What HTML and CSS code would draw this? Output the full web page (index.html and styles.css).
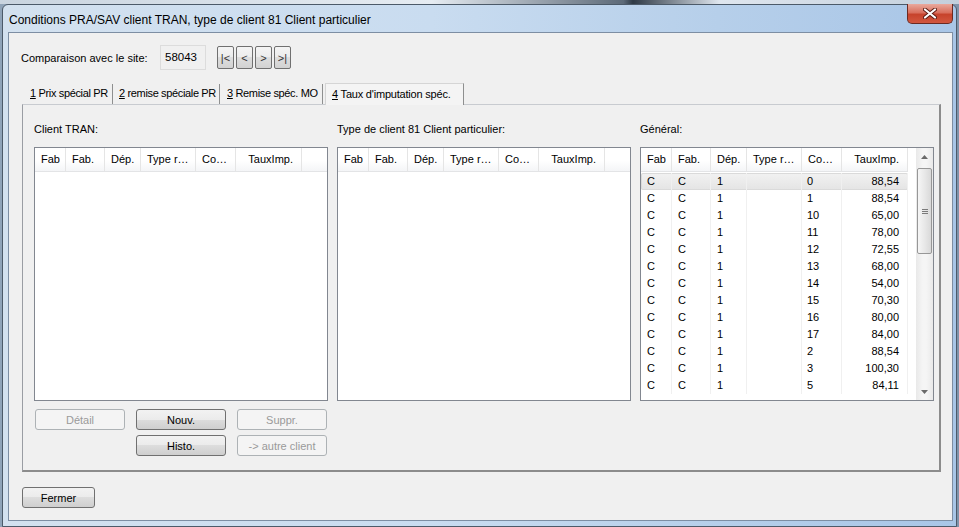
FILE: index.html
```html
<!DOCTYPE html>
<html lang="fr">
<head>
    <meta charset="UTF-8">
    <title>Conditions PRA/SAV client TRAN</title>
    <link rel="stylesheet" href="styles.css">
</head>
<body>
    <div class="behind"></div>
    <div class="window">
        <div class="titlebar">
            <span class="title">Conditions PRA/SAV client TRAN, type de client 81 Client particulier</span>
            <button class="close" type="button">
                <svg width="14" height="11" viewBox="0 0 14 11">
                    <path d="M2 1.5 L12 9.5 M12 1.5 L2 9.5" stroke="#5a1a12" stroke-width="4" stroke-linecap="round"/>
                    <path d="M2 1.5 L12 9.5 M12 1.5 L2 9.5" stroke="#ffffff" stroke-width="2.2" stroke-linecap="round"/>
                </svg>
            </button>
        </div>

        <div class="client">
            <!-- site de comparaison -->
            <div class="site-row">
                <span class="site-label">Comparaison avec le site:</span>
                <span class="site-box">58043</span>
                <div class="nav-btns">
                    <button type="button">|&lt;</button>
                    <button type="button">&lt;</button>
                    <button type="button">&gt;</button>
                    <button type="button">&gt;|</button>
                </div>
            </div>

            <!-- onglets -->
            <div class="tabs">
                <span class="tab t1"><u>1</u> Prix spécial PR</span>
                <span class="tab t2"><u>2</u> remise spéciale PR</span>
                <span class="tab t3"><u>3</u> Remise spéc. MO</span>
                <span class="tab t4 selected"><u>4</u> Taux d'imputation spéc.</span>
            </div>

            <div class="panel">
                <div class="columns">
                    <!-- Client -->
                    <div class="col">
                        <div class="col-label">Client TRAN:</div>
                        <div class="listview">
                            <div class="lv-main">
                                <div class="lv-head">
                                    <span>Fab</span><span>Fab.</span><span>Dép.</span><span>Type r…</span><span>Co…</span><span class="num">TauxImp.</span>
                                </div>
                                <div class="lv-body"></div>
                            </div>
                        </div>
                        <div class="btn-grid">
                            <button type="button" class="btn" disabled>Détail</button>
                            <button type="button" class="btn">Nouv.</button>
                            <button type="button" class="btn" disabled>Suppr.</button>
                            <span></span>
                            <button type="button" class="btn">Histo.</button>
                            <button type="button" class="btn" disabled>-&gt; autre client</button>
                        </div>
                    </div>

                    <!-- Type de client -->
                    <div class="col">
                        <div class="col-label">Type de client 81 Client particulier:</div>
                        <div class="listview">
                            <div class="lv-main">
                                <div class="lv-head">
                                    <span>Fab</span><span>Fab.</span><span>Dép.</span><span>Type r…</span><span>Co…</span><span class="num">TauxImp.</span>
                                </div>
                                <div class="lv-body"></div>
                            </div>
                        </div>
                    </div>

                    <!-- Général -->
                    <div class="col">
                        <div class="col-label">Général:</div>
                        <div class="listview">
                            <div class="lv-main">
                                <div class="lv-head">
                                    <span>Fab</span><span>Fab.</span><span>Dép.</span><span>Type r…</span><span>Co…</span><span class="num">TauxImp.</span>
                                </div>
                                <div class="lv-body">
                                    <div class="lv-row sel"><span>C</span><span>C</span><span>1</span><span></span><span>0</span><span class="num">88,54</span></div>
                                    <div class="lv-row"><span>C</span><span>C</span><span>1</span><span></span><span>1</span><span class="num">88,54</span></div>
                                    <div class="lv-row"><span>C</span><span>C</span><span>1</span><span></span><span>10</span><span class="num">65,00</span></div>
                                    <div class="lv-row"><span>C</span><span>C</span><span>1</span><span></span><span>11</span><span class="num">78,00</span></div>
                                    <div class="lv-row"><span>C</span><span>C</span><span>1</span><span></span><span>12</span><span class="num">72,55</span></div>
                                    <div class="lv-row"><span>C</span><span>C</span><span>1</span><span></span><span>13</span><span class="num">68,00</span></div>
                                    <div class="lv-row"><span>C</span><span>C</span><span>1</span><span></span><span>14</span><span class="num">54,00</span></div>
                                    <div class="lv-row"><span>C</span><span>C</span><span>1</span><span></span><span>15</span><span class="num">70,30</span></div>
                                    <div class="lv-row"><span>C</span><span>C</span><span>1</span><span></span><span>16</span><span class="num">80,00</span></div>
                                    <div class="lv-row"><span>C</span><span>C</span><span>1</span><span></span><span>17</span><span class="num">84,00</span></div>
                                    <div class="lv-row"><span>C</span><span>C</span><span>1</span><span></span><span>2</span><span class="num">88,54</span></div>
                                    <div class="lv-row"><span>C</span><span>C</span><span>1</span><span></span><span>3</span><span class="num">100,30</span></div>
                                    <div class="lv-row"><span>C</span><span>C</span><span>1</span><span></span><span>5</span><span class="num">84,11</span></div>
                                </div>
                            </div>
                            <div class="lv-scroll">
                                <div class="arrow">
                                    <svg width="7" height="4" viewBox="0 0 7 4"><path d="M0 4 L3.5 0 L7 4 Z" fill="#6a6a6a"/></svg>
                                </div>
                                <div class="track">
                                    <div class="thumb"><span class="grip"></span></div>
                                </div>
                                <div class="arrow">
                                    <svg width="7" height="4" viewBox="0 0 7 4"><path d="M0 0 L7 0 L3.5 4 Z" fill="#6a6a6a"/></svg>
                                </div>
                            </div>
                        </div>
                    </div>
                </div>
            </div>

            <div class="footer-row">
                <button type="button" class="btn fermer">Fermer</button>
            </div>
        </div>
    </div>
</body>
</html>
```

FILE: styles.css
```css
/* Style général */
body {
    margin: 0;
    padding: 0;
    width: 959px;
    height: 527px;
    overflow: hidden;
    background: linear-gradient(to right, #8fa3b8, #b7c8da 40%, #9fb4ca 70%, #7f93aa);
    font-family: "Liberation Sans", Arial, sans-serif;
    font-size: 11px;
    color: #000;
}

button {
    font-family: inherit;
    font-size: 11px;
    color: #000;
}

.behind {
    height: 4px;
    background: linear-gradient(to right, #c9d4df, #e6ecf2 45%, #5d6a78 65%, #2f3a46 66%, #dfe6ee 75%, #c3cfdc);
}

/* Fenêtre */
.window {
    margin-left: 2px;
    width: 955px;
    height: 523px;
    box-sizing: border-box;
    border: 1px solid #4c5a69;
    border-radius: 6px 6px 0 0;
    background: linear-gradient(to right, #d3e1ef, #c9dcf0 45%, #b6cfea 75%, #a9c6e7);
}

.titlebar {
    height: 27px;
    display: flex;
    align-items: flex-start;
}

.title {
    align-self: center;
    padding-left: 6px;
    padding-top: 2px;
    font-size: 12px;
    color: #000;
}

.close {
    margin-left: auto;
    margin-right: 3px;
    margin-top: -1px;
    width: 46px;
    height: 20px;
    padding: 0;
    border: 1px solid #6b2a22;
    border-top: none;
    border-radius: 0 0 5px 5px;
    background: linear-gradient(#e9a99d 0%, #d9705e 45%, #c7432c 55%, #d2573f 100%);
    display: flex;
    align-items: center;
    justify-content: center;
}

.client {
    margin: 0 3px 0 5px;
    height: 489px;
    box-sizing: border-box;
    border: 1px solid #7d8ea3;
    background-color: #f0f0f0;
}

/* Site */
.site-row {
    display: flex;
    align-items: center;
    margin-top: 12px;
    padding-left: 12px;
    height: 25px;
}

.site-label {
    width: 139px;
}

.site-box {
    width: 46px;
    height: 25px;
    box-sizing: border-box;
    border: 1px solid #dcdcdc;
    padding: 0 4px;
    line-height: 23px;
    font-size: 11.5px;
}

.nav-btns {
    display: flex;
    gap: 2px;
    margin-left: 11px;
}

.nav-btns button {
    width: 17px;
    height: 23px;
    padding: 0;
    font-size: 11px;
    border: 1px solid #707070;
    border-radius: 2px;
    background: linear-gradient(#f4f4f4 0%, #ececec 50%, #dedede 50%, #d2d2d2 100%);
    color: #333;
}

/* Onglets */
.tabs {
    display: flex;
    margin-top: 14px;
    margin-left: 16px;
    height: 20px;
    align-items: flex-end;
}

.tab {
    height: 20px;
    box-sizing: border-box;
    line-height: 19px;
    padding-left: 5px;
    border-right: 1px solid #8e8f8f;
    white-space: nowrap;
    letter-spacing: -0.35px;
}

.t1 { width: 88px; }
.t2 { width: 107px; padding-left: 6px; }
.t3 { width: 103px; padding-left: 7px; }

.tab.selected {
    width: 139px;
    height: 22px;
    margin-left: 2px;
    margin-bottom: -1px;
    padding-left: 6px;
    line-height: 20px;
    background-color: #f4f4f4;
    border-top: 1px solid #d5d5d5;
    border-left: 1px solid #d5d5d5;
    border-right: 1px solid #8e8f8f;
    letter-spacing: -0.2px;
    position: relative;
}

.panel {
    margin-left: 13px;
    width: 919px;
    height: 368px;
    box-sizing: border-box;
    border: 1px solid #9a9da3;
    border-top-color: #c8cbd0;
    border-bottom: 2px solid #8c8c8c;
    border-right: 2px solid #8c8c8c;
    background-color: #f0f0f0;
}

.columns {
    display: flex;
    gap: 9px;
    padding: 17px 0 0 11px;
}

.col {
    width: 294px;
}

.col-label {
    height: 14px;
    line-height: 14px;
    margin-bottom: 11px;
}

/* Listes */
.listview {
    height: 254px;
    box-sizing: border-box;
    border: 1px solid #828790;
    background-color: #fff;
    display: flex;
}

.lv-main {
    flex: 1;
    display: flex;
    flex-direction: column;
    overflow: hidden;
}

.lv-head,
.lv-row {
    display: grid;
    grid-template-columns: 31px 39px 36px 55px 40px 66px;
}

.lv-head {
    height: 24px;
    box-sizing: border-box;
    border-bottom: 1px solid #e3e4e6;
    background: linear-gradient(#ffffff 0%, #ffffff 55%, #f4f5f7 100%);
}

.lv-head span {
    line-height: 23px;
    padding-left: 6px;
    border-right: 1px solid #e5e5e5;
    white-space: nowrap;
    overflow: hidden;
}

.lv-head .num,
.lv-row .num {
    text-align: right;
    padding-left: 0;
    padding-right: 8px;
}

.lv-body {
    flex: 1;
    padding-top: 1px;
}

.lv-row {
    height: 17px;
    line-height: 17px;
}

.lv-row span {
    padding-left: 6px;
    border-right: 1px solid #f0f0f0;
    white-space: nowrap;
}

.lv-row span:nth-child(5) {
    padding-left: 5px;
}

.lv-row.sel {
    background: linear-gradient(#f2f2f2, #e4e4e4);
    border-radius: 2px;
    box-shadow: inset 0 0 0 1px #dadada;
}

/* Barre de défilement */
.lv-scroll {
    width: 17px;
    margin-left: 8px;
    display: flex;
    flex-direction: column;
    background: linear-gradient(to right, #e9e9e9, #f5f5f5 40%, #f5f5f5 60%, #e9e9e9);
}

.arrow {
    height: 17px;
    display: flex;
    align-items: center;
    justify-content: center;
}

.track {
    flex: 1;
    padding-top: 3px;
}

.thumb {
    margin: 0 1px;
    height: 86px;
    box-sizing: border-box;
    border: 1px solid #979797;
    border-radius: 2px;
    background: linear-gradient(to right, #f6f6f6, #e8e8e8 50%, #d9d9d9);
    display: flex;
    align-items: center;
    justify-content: center;
}

.grip {
    width: 6px;
    height: 5px;
    background: linear-gradient(#7a7a7a 0 1px, transparent 1px 2px, #7a7a7a 2px 3px, transparent 3px 4px, #7a7a7a 4px 5px);
}

/* Boutons */
.btn-grid {
    display: grid;
    grid-template-columns: 90px 90px 90px;
    column-gap: 11px;
    row-gap: 5px;
    margin-top: 8px;
    padding-left: 1px;
}

.btn {
    height: 21px;
    padding: 0;
    border: 1px solid #707070;
    border-radius: 3px;
    background: linear-gradient(#f2f2f2 0%, #ebebeb 50%, #dddddd 50%, #cfcfcf 100%);
    cursor: pointer;
}

.btn:disabled {
    border-color: #adb2b5;
    background: #f4f4f4;
    color: #9a9a9a;
}

.footer-row {
    padding: 15px 0 0 13px;
}

.fermer {
    width: 73px;
}
```
